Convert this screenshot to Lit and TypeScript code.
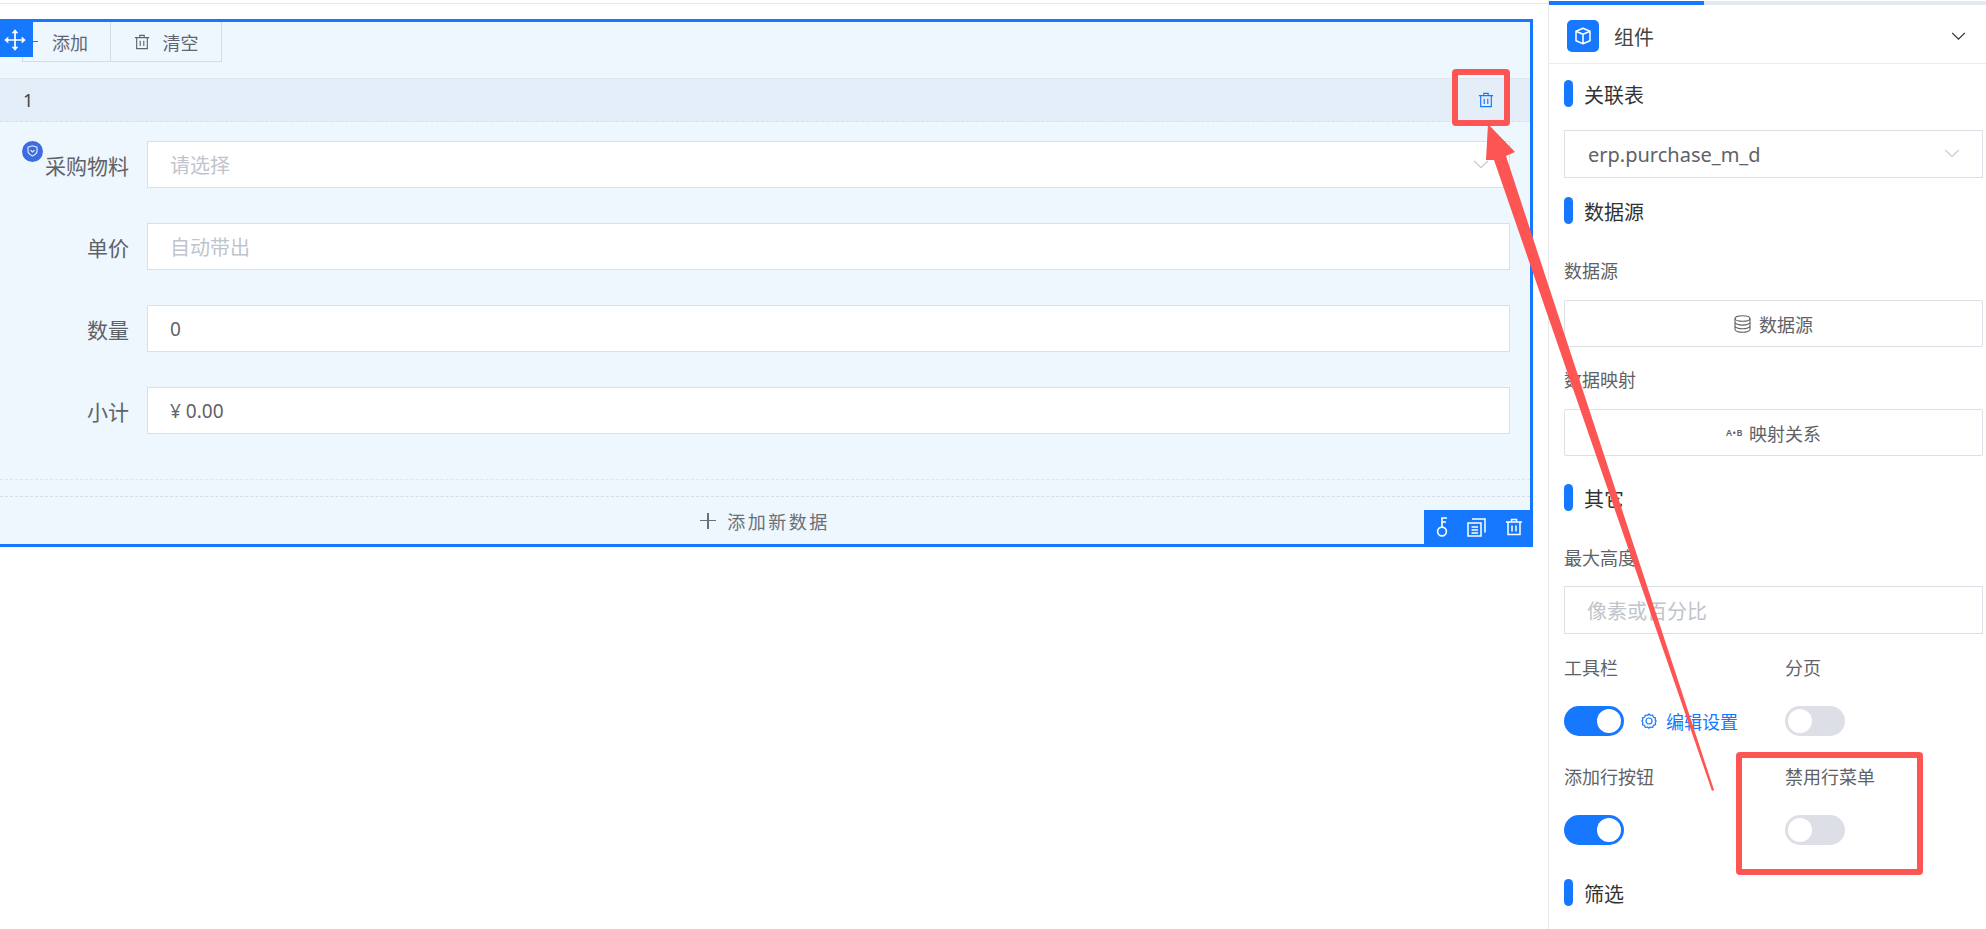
import { LitElement, html, css, svg } from "lit";
import { customElement } from "lit/decorators.js";

const BLUE = "#1677ff";

const trashIcon = (size: number, color: string, sw = 1.4) => html`
  <svg width=${size} height=${size} viewBox="0 0 18 18" fill="none" stroke=${color} stroke-width=${sw}>
    <path d="M1 4h16M6.5 4V1.5h5V4M3 4v12.5h12V4M7 7.5v6M11 7.5v6" />
  </svg>
`;

const chevron = (color: string, w = 16) => html`
  <svg width=${w} height=${w * 0.6} viewBox="0 0 16 10" fill="none" stroke=${color} stroke-width="1.4">
    <path d="M1 1l7 7 7-7" />
  </svg>
`;

const cubeIcon = html`
  <svg width="18" height="18" viewBox="0 0 18 18" fill="none" stroke="#fff" stroke-width="1.5" stroke-linejoin="round">
    <path d="M9 1.2l7 3v9.6l-7 3-7-3V4.2zM2 4.2l7 3 7-3M9 7.2v9.6" />
  </svg>
`;

const moveIcon = html`
  <svg width="22" height="22" viewBox="0 0 22 22" fill="#fff" stroke="#fff" stroke-width="1.7">
    <path d="M3 11h16M11 3v16" fill="none" />
    <path d="M11 .3l3.4 4h-6.8zM11 21.700l3.4-4h-6.800zM.3 11l4-3.400v6.800zM21.700 11l-4-3.400v6.800z" stroke="none" />
  </svg>
`;

const keyIcon = html`
  <svg width="12" height="20" viewBox="0 0 12 20" fill="none" stroke="#fff" stroke-width="1.6">
    <circle cx="6" cy="14.5" r="4.4" />
    <path d="M6 10V1h5M6 5h4" />
  </svg>
`;

const copyIcon = html`
  <svg width="19" height="19" viewBox="0 0 19 19" fill="none" stroke="#fff" stroke-width="1.5">
    <path d="M5 1h13v13.5M1 5h13v13H1zM4.5 9h6.5M4.5 12h6.5M4.5 15h6.5" />
  </svg>
`;

const dbIcon = html`
  <svg width="17" height="18" viewBox="0 0 17 18" fill="none" stroke="#606266" stroke-width="1.1">
    <ellipse cx="8.5" cy="3.5" rx="7.5" ry="2.8" />
    <path d="M1 3.5v11c0 1.5 3.4 2.8 7.5 2.8s7.5-1.3 7.5-2.8v-11M1 7.3c0 1.5 3.4 2.8 7.5 2.8s7.5-1.3 7.5-2.8M1 11c0 1.5 3.4 2.8 7.5 2.8S16 12.5 16 11" />
  </svg>
`;

const gearIcon = html`
  <svg width="16" height="16" viewBox="0 0 16 16" fill="none" stroke=${BLUE} stroke-width="1.2">
    <path d="M8 .8l1.5 1.7 2.2-.5.7 2.2 2.2.7-.5 2.100L15.200 8l-1.100 1.500.5 2.200-2.200.7-.7 2.100-2.200-.5L8 15.200l-1.500-1.200-2.200.5-.7-2.100-2.200-.7.5-2.200L.8 8l1.100-1-.5-2.100 2.200-.7.7-2.200 2.200.5z" stroke-linejoin="round" />
    <circle cx="8" cy="8" r="3" />
  </svg>
`;

@customElement("app-root")
export class AppRoot extends LitElement {
  static styles = css`
    :host {
      display: block;
      position: relative;
      width: 1986px;
      height: 929px;
      overflow: hidden;
      background: #fff;
      font-family: "Noto Sans", "Noto Sans CJK SC", sans-serif;
      color: #606266;
    }
    * { box-sizing: border-box; }
    .page { display: flex; height: 100%; }
    .canvas { width: 1548px; flex-shrink: 0; padding-top: 3px; }
    .canvas-inner { border-top: 1px solid #e8e8e8; padding-top: 15px; }

    /* selected sub-form */
    .subform {
      position: relative;
      width: 1533px;
      height: 528px;
      background: #eef6fe;
      border: 3px solid #1677ff;
      border-left: none;
    }
    .handle {
      position: absolute;
      left: 0;
      top: 0;
      width: 33px;
      height: 35px;
      padding-right: 4px;
      background: #1677ff;
      display: flex;
      align-items: center;
      justify-content: center;
    }
    .toolbar { display: flex; height: 40px; padding-left: 22px; }
    .tool {
      display: flex;
      align-items: center;
      justify-content: center;
      gap: 13px;
      height: 40px;
      border: 1px solid #d3deea;
      border-top: none;
      font-size: 18px;
      color: #5f6670;
    }
    .tool.add { width: 88px; border-right: none; justify-content: flex-start; padding-left: 5px; gap: 14px; }
    .tool.clear { width: 112px; }
    .plus { width: 10px; height: 1px; background: #5f6670; }

    .row-head {
      display: flex;
      align-items: center;
      justify-content: space-between;
      height: 44px;
      margin-top: 16px;
      padding: 0 36px 0 23px;
      background: #e4eef8;
      border-top: 1px solid #dde7f1;
      border-bottom: 1px dashed #d8e2ec;
      font-size: 18px;
      color: #444;
    }
    .row-trash { display: flex; }
    .row-body {
      display: flex;
      flex-direction: column;
      gap: 35px;
      padding: 19px 20px 0 0;
    }
    .field { display: flex; align-items: center; height: 47px; }
    .field-label {
      position: relative;
      width: 129px;
      margin-right: 18px;
      text-align: right;
      font-size: 21px;
      color: #5f6266;
    }
    .tip {
      position: absolute;
      left: 22px;
      top: -9px;
      width: 21px;
      height: 21px;
      border-radius: 50%;
      background: #3d6be0;
      display: flex;
      align-items: center;
      justify-content: center;
    }
    .input {
      flex: 1;
      height: 100%;
      display: flex;
      align-items: center;
      justify-content: space-between;
      padding: 0 20px 0 22px;
      background: #fff;
      border: 1px solid #dcdfe6;
      font-size: 19px;
      color: #5f6266;
    }
    .placeholder { color: #c0c4cc; font-size: 20px; }
    .row-end { height: 46px; border-bottom: 1px dashed #dde5ee; }
    .add-row {
      display: flex;
      align-items: center;
      justify-content: center;
      gap: 11px;
      height: 48px;
      margin-top: 16px;
      border-top: 1px dashed #d3deea;
      font-size: 18px;
      letter-spacing: 2.5px;
      color: #6b7078;
    }
    .add-cross { position: relative; width: 16px; height: 16px; }
    .add-cross::before,
    .add-cross::after { content: ""; position: absolute; background: #6b7078; }
    .add-cross::before { left: 0; right: 0; top: 7px; height: 1.5px; }
    .add-cross::after { top: 0; bottom: 0; left: 7px; width: 1.5px; }
    .actions {
      position: absolute;
      right: -3px;
      bottom: -3px;
      width: 109px;
      height: 37px;
      padding: 0 10px 3px 12px;
      background: #1677ff;
      display: flex;
      align-items: center;
      justify-content: space-between;
    }

    /* settings panel */
    .panel { flex: 1; border-left: 1px solid #e8e8e8; }
    .tabs { height: 4px; margin-top: 1px; background: #e4e8f0; display: flex; }
    .tabs i { width: 155px; background: #1677ff; }
    .panel-head {
      display: flex;
      align-items: center;
      height: 59px;
      padding: 4px 20px 0 18px;
      border-bottom: 1px solid #e8ebf0;
      font-size: 20px;
      color: #444;
    }
    .cube {
      width: 32px;
      height: 32px;
      margin-right: 15px;
      background: #1677ff;
      border-radius: 5px;
      display: flex;
      align-items: center;
      justify-content: center;
    }
    .panel-head .grow { flex: 1; }
    .panel-body { padding: 16px 3px 0 15px; }
    .section {
      display: flex;
      align-items: center;
      gap: 11px;
      height: 27px;
      font-size: 20px;
      color: #333;
    }
    .section i { width: 9px; height: 27px; border-radius: 5px; background: #1677ff; }
    .section span { position: relative; top: 1px; }
    .label { height: 24px; line-height: 24px; font-size: 18px; color: #606266; }
    .box {
      display: flex;
      align-items: center;
      height: 47px;
      margin-top: 17px;
      border: 1px solid #dcdfe6;
      font-size: 19px;
      color: #606266;
    }
    .box.select { justify-content: space-between; height: 48px; margin-top: 23px; padding: 0 22px 0 23px; font-size: 20px; }
    .box.btn { justify-content: center; gap: 8px; border-radius: 2px; font-size: 18px; }
    .box.btn .ab-gap { margin-right: -2px; }
    .box.text { height: 48px; margin-top: 16px; padding: 0 22px; }
    .ab { font-size: 9px; font-weight: 600; letter-spacing: 0.5px; }
    .toggles { display: grid; grid-template-columns: 221px 1fr; row-gap: 29px; }
    .label + .switch-line { margin-top: 26px; }
    .switch-line { display: flex; align-items: center; height: 30px; }
    .switch {
      position: relative;
      width: 60px;
      height: 30px;
      border-radius: 15px;
      background: #dcdfe6;
    }
    .switch::after {
      content: "";
      position: absolute;
      left: 3px;
      top: 3px;
      width: 24px;
      height: 24px;
      border-radius: 50%;
      background: #fff;
    }
    .switch.on { background: #1677ff; }
    .switch.on::after { left: 33px; }
    .edit {
      display: flex;
      align-items: center;
      gap: 9px;
      margin-left: 17px;
      font-size: 18px;
      color: #1677ff;
    }

    /* annotations drawn over the screenshot */
    .marks { position: absolute; left: 0; top: 0; pointer-events: none; }
  `;

  private field(label: string, value: string, placeholder = false, tip = false, arrow = false) {
    return html`
      <div class="field">
        <div class="field-label">
          ${tip
            ? html`<span class="tip">
                <svg width="11" height="12" viewBox="0 0 11 12" fill="none" stroke="#dfe7ff" stroke-width="1.2">
                  <path d="M5.5 .8l4.5 1.5v4c0 2-2 3.500-4.500 4.700C3 9.800 1 8.300 1 6.300v-4zM3.500 5.200l2 1.800 2-1.800" />
                </svg>
              </span>`
            : ""}
          ${label}
        </div>
        <div class="input">
          <span class=${placeholder ? "placeholder" : ""}>${value}</span>
          ${arrow ? chevron("#c8ccd4", 16) : ""}
        </div>
      </div>
    `;
  }

  private renderSubform() {
    return html`
      <div class="subform">
        <div class="toolbar">
          <div class="tool add"><span class="plus"></span>添加</div>
          <div class="tool clear">${trashIcon(16, "#5f6670", 1.3)}清空</div>
        </div>
        <div class="row-head">
          <span>1</span>
          <span class="row-trash">${trashIcon(16, BLUE, 1.3)}</span>
        </div>
        <div class="row-body">
          ${this.field("采购物料", "请选择", true, true, true)}
          ${this.field("单价", "自动带出", true)}
          ${this.field("数量", "0")}
          ${this.field("小计", "¥ 0.00")}
        </div>
        <div class="row-end"></div>
        <div class="add-row"><span class="add-cross"></span>添加新数据</div>
        <div class="handle">${moveIcon}</div>
        <div class="actions">${keyIcon}${copyIcon}${trashIcon(18, "#fff", 1.5)}</div>
      </div>
    `;
  }

  private renderPanel() {
    return html`
      <aside class="panel">
        <div class="tabs"><i></i></div>
        <div class="panel-head">
          <span class="cube">${cubeIcon}</span>
          <span class="grow">组件</span>
          ${chevron("#333", 15)}
        </div>
        <div class="panel-body">
          <div class="section"><i></i><span>关联表</span></div>
          <div class="box select">erp.purchase_m_d ${chevron("#c8ccd4", 16)}</div>
          <div class="section" style="margin-top:19px"><i></i><span>数据源</span></div>
          <div class="label" style="margin-top:35px">数据源</div>
          <div class="box btn">${dbIcon}数据源</div>
          <div class="label" style="margin-top:21px">数据映射</div>
          <div class="box btn"><span class="ab ab-gap">A•B</span>映射关系</div>
          <div class="section" style="margin-top:28px"><i></i><span>其它</span></div>
          <div class="label" style="margin-top:35px">最大高度</div>
          <div class="box text"><span class="placeholder">像素或百分比</span></div>
          <div class="toggles" style="margin-top:22px">
            <div>
              <div class="label">工具栏</div>
              <div class="switch-line">
                <span class="switch on"></span>
                <span class="edit">${gearIcon}编辑设置</span>
              </div>
            </div>
            <div>
              <div class="label">分页</div>
              <div class="switch-line"><span class="switch"></span></div>
            </div>
            <div>
              <div class="label">添加行按钮</div>
              <div class="switch-line"><span class="switch on"></span></div>
            </div>
            <div>
              <div class="label">禁用行菜单</div>
              <div class="switch-line"><span class="switch"></span></div>
            </div>
          </div>
          <div class="section" style="margin-top:34px"><i></i><span>筛选</span></div>
        </div>
      </aside>
    `;
  }

  render() {
    return html`
      <div class="page">
        <div class="canvas">
          <div class="canvas-inner">${this.renderSubform()}</div>
        </div>
        ${this.renderPanel()}
      </div>
      <svg class="marks" width="1986" height="929" viewBox="0 0 1986 929">
        ${svg`
          <rect x="1455" y="72" width="52" height="51" rx="1" fill="none" stroke="#fd5454" stroke-width="6" />
          <rect x="1739" y="755" width="181" height="117" rx="1" fill="none" stroke="#fd5454" stroke-width="6" />
          <polygon fill="#fd5454" points="1488,124 1515,152 1506,156 1714,790 1712,791 1494,160 1486,160" />
        `}
      </svg>
    `;
  }
}
